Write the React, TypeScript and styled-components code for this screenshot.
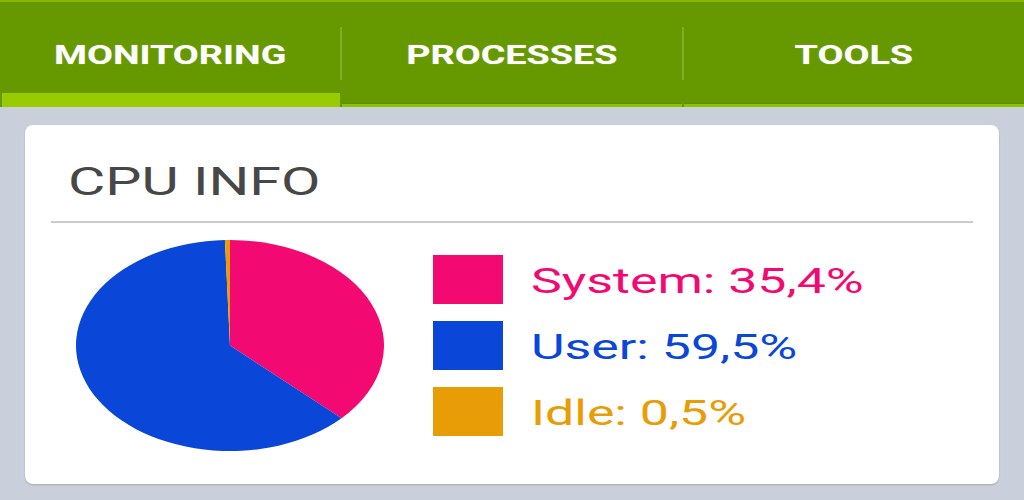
import React from "react";
import styled, { createGlobalStyle } from "styled-components";

const GlobalStyle = createGlobalStyle`
  html, body {
    margin: 0;
    padding: 0;
    background: #c9d0dc;
    font-family: Roboto, "Liberation Sans", sans-serif;
  }
  #root {
    width: 1024px;
    height: 500px;
    overflow: hidden;
  }
`;

const Page = styled.div`
  width: 1024px;
  height: 500px;
  display: flex;
  flex-direction: column;
  background: #c9d0dc;
`;

const TabBar = styled.div`
  height: 107px;
  box-sizing: border-box;
  display: flex;
  background: #669900;
  border-top: 2px solid #86b800;
`;

const Tab = styled.div`
  flex: 1;
  display: flex;
  flex-direction: column;
`;

const TabLabel = styled.div`
  height: 92px;
  box-sizing: border-box;
  padding-top: 14px;
  display: flex;
  align-items: center;
  justify-content: center;
`;

const Stretch = styled.span<{ $origin?: string; $scale?: number }>`
  display: inline-block;
  white-space: nowrap;
  transform: scaleX(${(p) => p.$scale || 1.45});
  transform-origin: ${(p) => p.$origin || "center"};
`;

const TabText = styled(Stretch)`
  color: #ffffff;
  font-weight: 700;
  font-size: 26px;
  line-height: 26px;
  text-shadow: 0 0 1px rgba(255, 255, 255, 0.4);
`;

const Indicator = styled.div<{ $active?: boolean }>`
  margin-top: auto;
  height: ${(p) => (p.$active ? "14px" : "4px")};
  box-sizing: border-box;
  background: ${(p) => (p.$active ? "#99cc00" : "#8cc400")};
  border-top: 1px solid ${(p) => (p.$active ? "#99cc00" : "#5e8c00")};
  margin-left: ${(p) => (p.$active ? "2px" : "0")};
`;

const Divider = styled.div`
  width: 2px;
  display: flex;
  flex-direction: column;
  &::before {
    content: "";
    display: block;
    margin-top: 25px;
    height: 53px;
    background: rgba(150, 190, 70, 0.55);
  }
`;

const Card = styled.div`
  margin: 18px 25px 0 25px;
  height: 359px;
  box-sizing: border-box;
  background: #ffffff;
  border-radius: 8px;
  box-shadow: 0 1px 2px rgba(0, 0, 0, 0.18);
  padding: 0 26px;
  display: flex;
  flex-direction: column;
`;

const CardHeader = styled.div`
  padding: 38px 0 19px 17px;
  border-bottom: 2px solid #cbcbcb;
`;

const Title = styled(Stretch)`
  font-size: 39px;
  line-height: 39px;
  color: #474747;
  font-weight: 400;
`;

const CardBody = styled.div`
  display: flex;
  align-items: center;
  padding: 17px 0 0 25px;
  gap: 49px;
`;

const PieSvg = styled.svg`
  width: 308px;
  height: 211px;
  display: block;
  flex: none;
`;

const Legend = styled.div`
  display: flex;
  flex-direction: column;
  gap: 17px;
`;

const LegendRow = styled.div`
  display: flex;
  align-items: center;
  gap: 28px;
`;

const Swatch = styled.div<{ $color: string }>`
  width: 70px;
  height: 49px;
  background: ${(p) => p.$color};
  flex: none;
`;

const LegendText = styled(Stretch)<{ $color: string }>`
  color: ${(p) => p.$color};
  font-size: 35px;
  line-height: 35px;
  padding-top: 4px;
  font-weight: 400;
`;

const tabs = [
  { label: "MONITORING", active: true },
  { label: "PROCESSES", active: false },
  { label: "TOOLS", active: false },
];

const data = [
  { label: "System", value: 35.4, color: "#f20a72" },
  { label: "User", value: 59.5, color: "#0a47d9" },
  { label: "Idle", value: 0.5, color: "#e89d06" },
];

function slicePaths() {
  const total = data.reduce((s, d) => s + d.value, 0);
  let start = 0;
  return data.map((d) => {
    const sweep = (d.value / total) * Math.PI * 2;
    const end = start + sweep;
    const x1 = 100 + 100 * Math.sin(start);
    const y1 = 100 - 100 * Math.cos(start);
    const x2 = 100 + 100 * Math.sin(end);
    const y2 = 100 - 100 * Math.cos(end);
    const large = sweep > Math.PI ? 1 : 0;
    start = end;
    return {
      color: d.color,
      d: `M100 100 L${x1.toFixed(3)} ${y1.toFixed(3)} A100 100 0 ${large} 1 ${x2.toFixed(3)} ${y2.toFixed(3)} Z`,
    };
  });
}

export default function App() {
  const slices = slicePaths();
  return (
    <Page>
      <GlobalStyle />
      <TabBar>
        {tabs.map((t, i) => (
          <React.Fragment key={t.label}>
            {i > 0 && <Divider />}
            <Tab>
              <TabLabel>
                <TabText>{t.label}</TabText>
              </TabLabel>
              <Indicator $active={t.active} />
            </Tab>
          </React.Fragment>
        ))}
      </TabBar>
      <Card>
        <CardHeader>
          <Title $origin="left" $scale={1.47}>CPU INFO</Title>
        </CardHeader>
        <CardBody>
          <PieSvg viewBox="0 0 200 200" preserveAspectRatio="none">
            {slices.map((s) => (
              <path key={s.color} d={s.d} fill={s.color} />
            ))}
          </PieSvg>
          <Legend>
            {data.map((d) => (
              <LegendRow key={d.label}>
                <Swatch $color={d.color} />
                <LegendText $origin="left" $scale={1.48} $color={d.color}>
                  {d.label}: {d.value.toFixed(1).replace(".", ",")}%
                </LegendText>
              </LegendRow>
            ))}
          </Legend>
        </CardBody>
      </Card>
    </Page>
  );
}
